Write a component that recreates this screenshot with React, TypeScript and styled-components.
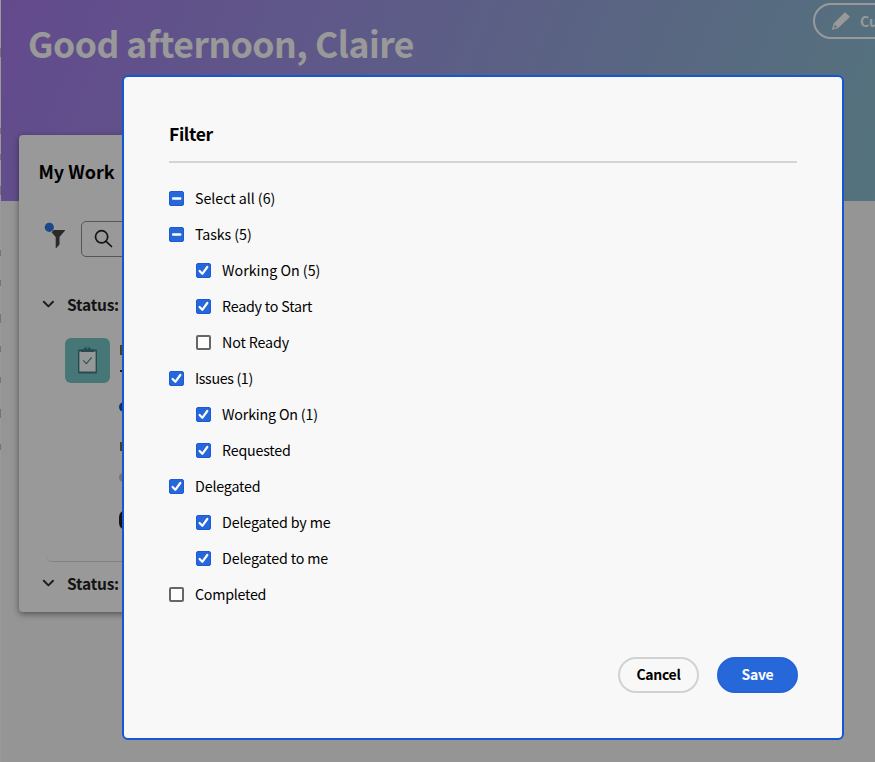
import React from "react";
import styled, { createGlobalStyle } from "styled-components";

const GlobalStyle = createGlobalStyle`
  *, *::before, *::after { box-sizing: border-box; }
  body {
    margin: 0;
    overflow: hidden;
    font-family: "Noto Sans CJK SC", "Noto Sans", sans-serif;
    color: #000;
  }
  svg { flex: none; display: block; }
`;

/* ---------- Page behind the dialog ---------- */

const Page = styled.div`
  display: flex;
  width: 100vw;
  height: 762px;
  overflow: hidden;
  background: #f8f8f8;
`;

const NavEdge = styled.div`
  display: flex;
  flex-direction: column;
  align-items: flex-start;
  flex: none;
  width: 1px;
  background: #fff;
  padding-top: 48px;
`;

const NavMark = styled.span<{ $gap: number; $tall?: boolean }>`
  flex: none;
  width: 1px;
  height: ${(p) => (p.$tall ? 9 : 6)}px;
  margin-bottom: ${(p) => p.$gap}px;
  background: #c4c4c4;
`;

const Main = styled.main`
  flex: 1;
  min-width: 0;
`;

const Hero = styled.header`
  display: flex;
  justify-content: space-between;
  align-items: flex-start;
  height: 201px;
  background: linear-gradient(112deg, #a67bec 0%, #9c98e2 42%, #94acd8 72%, #8cc0d0 100%);
`;

const Greeting = styled.h1`
  margin: 22px 0 0 27px;
  font-size: 35.5px;
  line-height: 42px;
  font-weight: 700;
  letter-spacing: -0.5px;
  white-space: nowrap;
  color: #fff;
`;

const CustomizeButton = styled.button`
  display: flex;
  align-items: center;
  gap: 9px;
  flex: none;
  width: 130px;
  height: 36px;
  margin: 3px -68px 0 0;
  padding: 0 0 1px 16px;
  border: 2px solid #fff;
  border-radius: 18px;
  background: transparent;
  color: #fff;
  font: 700 14px/18px "Noto Sans CJK SC", sans-serif;
`;

const Card = styled.section`
  position: relative;
  width: 420px;
  height: 477px;
  margin: -66px 0 0 18px;
  border-radius: 4px;
  background: #fff;
  box-shadow: 0 2px 6px rgba(0, 0, 0, 0.45);
`;

const CardTitle = styled.h2`
  margin: 0;
  padding: 23px 0 0 19.5px;
  font-size: 18px;
  line-height: 26px;
  font-weight: 700;
`;

const Toolbar = styled.div`
  display: flex;
  align-items: flex-start;
  gap: 12px;
  padding: 37px 0 0 25px;
`;

const SearchBox = styled.div`
  display: flex;
  align-items: center;
  width: 240px;
  height: 36px;
  padding: 0 0 1px 12px;
  border: 1px solid #909090;
  border-radius: 5px;
`;

const StatusRow = styled.div<{ $top: number }>`
  display: flex;
  align-items: center;
  gap: 12px;
  height: 24px;
  margin-top: ${(p) => p.$top}px;
  padding-left: 23px;
  font-size: 15.5px;
  line-height: 24px;
  font-weight: 700;
  letter-spacing: -0.2px;
  color: #222;
`;

const WorkItem = styled.div`
  display: flex;
  gap: 10px;
  height: 224px;
  margin: 22px 0 0 28px;
  padding-left: 18px;
  border-bottom: 1px solid #d8d8d8;
  border-radius: 0 0 0 5px;
`;

const ItemDetails = styled.div`
  display: flex;
  flex-direction: column;
  padding-top: 7px;
`;

const DetailMark = styled.span<{ $h: number; $gap: number; $c: string; $round?: boolean }>`
  flex: none;
  width: 14px;
  height: ${(p) => p.$h}px;
  margin-bottom: ${(p) => p.$gap}px;
  margin-left: ${(p) => (p.$round ? -1 : 0)}px;
  border-radius: ${(p) => (p.$round ? "7px" : "0")};
  background: ${(p) => p.$c};
`;

/* ---------- Dialog ---------- */

const Overlay = styled.div`
  position: fixed;
  inset: 0;
  padding: 75px 0 0 122px;
  background: rgba(0, 0, 0, 0.4);
`;

const Dialog = styled.div`
  display: flex;
  flex-direction: column;
  width: 722px;
  height: 665px;
  padding: 45px 44px 45px 45px;
  border: 2px solid #1557d2;
  border-radius: 6px;
  background: #f8f8f8;
`;

const DialogTitle = styled.h2`
  margin: 0 1px 0 0;
  height: 41px;
  border-bottom: 2px solid #d4d4d4;
  font-size: 17.5px;
  line-height: 24px;
  font-weight: 700;
  letter-spacing: -0.35px;
`;

const Options = styled.ul`
  flex: 1;
  margin: 0;
  padding: 17px 0 0;
  list-style: none;
`;

const Option = styled.li<{ $nested: boolean }>`
  display: flex;
  align-items: center;
  gap: 11px;
  height: 36px;
  padding-left: ${(p) => (p.$nested ? 27 : 0)}px;
`;

const OptionText = styled.span<{ $track: number }>`
  font-size: 14.25px;
  line-height: 20px;
  letter-spacing: ${(p) => p.$track}px;
  white-space: nowrap;
`;

const Box = styled.span<{ $on: boolean }>`
  display: grid;
  place-items: center;
  flex: none;
  width: 15px;
  height: 15px;
  border: ${(p) => (p.$on ? "1px solid #1d5bd4" : "2px solid #666")};
  border-radius: 2px;
  background: ${(p) => (p.$on ? "#2667da" : "#fcfcfc")};
`;

const Actions = styled.div`
  display: flex;
  justify-content: flex-end;
  gap: 18px;
`;

const ActionButton = styled.button<{ $primary?: boolean }>`
  width: 81px;
  height: 36px;
  padding: 0 0 2px;
  border: 2px solid ${(p) => (p.$primary ? "#2464d8" : "#d2d2d2")};
  border-radius: 18px;
  background: ${(p) => (p.$primary ? "#2667da" : "transparent")};
  color: ${(p) => (p.$primary ? "#fff" : "#000")};
  font: 700 14px/20px "Noto Sans CJK SC", sans-serif;
  letter-spacing: -0.3px;
`;

/* ---------- Icons ---------- */

const PencilIcon = () => (
  <svg width="20" height="20" viewBox="0 0 20 20" fill="#fff">
    <path fillRule="evenodd" d="M14.3 1.4 18.7 5.6Q18.9 5.9 18.6 6.2L7.2 17 1.4 18.8Q.8 19 1 18.4L2.6 12.6 13.7 1.4Q14 1.1 14.3 1.4ZM3.8 13.7 2.9 17 6.1 16Z" />
  </svg>
);

const FilterIcon = () => (
  <svg width="25" height="28" viewBox="0 0 25 28">
    <path d="M6.6 9H20.6Q21.4 9 20.9 9.7L15.5 16V23.6L12.3 27Q11.7 27.3 11.7 26.6V16L6.3 9.7Q5.8 9 6.6 9Z" fill="#464646" />
    <circle cx="5.3" cy="6.3" r="5.2" fill="#fff" />
    <circle cx="5.3" cy="6.3" r="4.6" fill="#2f78e4" />
  </svg>
);

const SearchIcon = () => (
  <svg width="20" height="20" viewBox="0 0 20 20" fill="none" stroke="#222" strokeWidth="1.7" strokeLinecap="round">
    <circle cx="7.6" cy="7.8" r="6.1" />
    <path d="M12.1 12.3 17.5 17.5" />
  </svg>
);

const Chevron = () => (
  <svg width="13" height="10" viewBox="0 0 13 10" fill="none" stroke="#333" strokeWidth="2" strokeLinecap="round" strokeLinejoin="round">
    <path d="M1.8 2.8 6.4 7.4 11 2.8" />
  </svg>
);

const TaskIcon = () => (
  <svg width="45" height="45" viewBox="0 0 45 45">
    <rect width="45" height="45" rx="6" fill="#75c5c3" />
    <rect x="13" y="11.5" width="19" height="24" rx="1" fill="#3f7f88" />
    <rect x="14.4" y="13.5" width="16.2" height="20" fill="#fbfdfd" />
    <path d="M16 11.4H18.7A4 4 0 0 1 26.3 11.4H29V14H16Z" fill="#3f7f88" />
    <circle cx="22.5" cy="10" r="1.1" fill="#75c5c3" />
    <path d="M18.2 22.3 21.4 25.7 26.7 19.3" fill="none" stroke="#3f8f98" strokeWidth="1.1" />
  </svg>
);

const CheckMark = () => (
  <svg width="13" height="13" viewBox="0 0 13 13" fill="none" stroke="#fff" strokeWidth="2.2" strokeLinecap="round" strokeLinejoin="round">
    <path d="M2.6 7 5.3 9.8 10.3 3" />
  </svg>
);

const DashMark = () => (
  <svg width="13" height="13" viewBox="0 0 13 13">
    <rect x="2" y="5.3" width="9.4" height="2.4" rx="1" fill="#fff" />
  </svg>
);

type State = "on" | "off" | "mixed";

const options: { text: string; state: State; nested?: boolean; track: number }[] = [
  { text: "Select all (6)", state: "mixed", track: -0.04 },
  { text: "Tasks (5)", state: "mixed", track: -0.08 },
  { text: "Working On (5)", state: "on", nested: true, track: 0 },
  { text: "Ready to Start", state: "on", nested: true, track: -0.2 },
  { text: "Not Ready", state: "off", nested: true, track: -0.12 },
  { text: "Issues (1)", state: "on", track: -0.36 },
  { text: "Working On (1)", state: "on", nested: true, track: -0.18 },
  { text: "Requested", state: "on", nested: true, track: -0.2 },
  { text: "Delegated", state: "on", track: -0.16 },
  { text: "Delegated by me", state: "on", nested: true, track: -0.14 },
  { text: "Delegated to me", state: "on", nested: true, track: -0.15 },
  { text: "Completed", state: "off", track: -0.26 },
];

const navGaps = [71, 20, 26, 55, 24, 28, 23, 25, 26, 26, 0];

export default function App() {
  return (
    <>
      <GlobalStyle />
      <Page>
        <NavEdge>
          {navGaps.map((gap, i) => (
            <NavMark key={i} $gap={gap} $tall={i % 3 === 0} />
          ))}
        </NavEdge>
        <Main>
          <Hero>
            <Greeting>Good afternoon, Claire</Greeting>
            <CustomizeButton>
              <PencilIcon />
              Customize
            </CustomizeButton>
          </Hero>
          <Card>
            <CardTitle>My Work</CardTitle>
            <Toolbar>
              <FilterIcon />
              <SearchBox>
                <SearchIcon />
              </SearchBox>
            </Toolbar>
            <StatusRow $top={35}>
              <Chevron />
              Status:
            </StatusRow>
            <WorkItem>
              <TaskIcon />
              <ItemDetails>
                <DetailMark $h={10} $gap={15} $c="#6f6f45" />
                <DetailMark $h={2} $gap={30} $c="#333" />
                <DetailMark $h={10} $gap={30} $c="#1c4fb0" $round />
                <DetailMark $h={9} $gap={22} $c="#6f6f45" />
                <DetailMark $h={9} $gap={28} $c="#c4c4c4" $round />
                <DetailMark $h={20} $gap={0} $c="#222" $round />
              </ItemDetails>
            </WorkItem>
            <StatusRow $top={9}>
              <Chevron />
              Status:
            </StatusRow>
          </Card>
        </Main>
      </Page>
      <Overlay>
        <Dialog role="dialog" aria-label="Filter">
          <DialogTitle>Filter</DialogTitle>
          <Options>
            {options.map((o, i) => (
              <Option key={i} $nested={!!o.nested}>
                <Box $on={o.state !== "off"}>
                  {o.state === "on" && <CheckMark />}
                  {o.state === "mixed" && <DashMark />}
                </Box>
                <OptionText $track={o.track}>{o.text}</OptionText>
              </Option>
            ))}
          </Options>
          <Actions>
            <ActionButton>Cancel</ActionButton>
            <ActionButton $primary>Save</ActionButton>
          </Actions>
        </Dialog>
      </Overlay>
    </>
  );
}
